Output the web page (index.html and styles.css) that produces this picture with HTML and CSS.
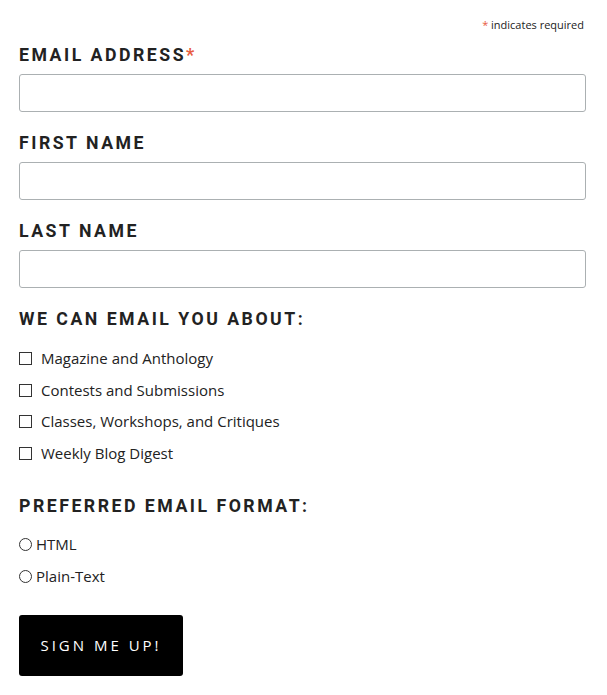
FILE: index.html
```html
<!DOCTYPE html>
<html>
<head>
<meta charset="utf-8">
<link rel="stylesheet" href="styles.css">
</head>
<body>
<form class="signup">
  <div class="req-note"><span class="asterisk">*</span> indicates required</div>
  <div class="field first">
    <label class="field-label" for="email">Email Address<span class="asterisk">*</span></label>
    <input class="text-input" id="email" type="email">
  </div>
  <div class="field">
    <label class="field-label" for="fname">First Name</label>
    <input class="text-input" id="fname" type="text">
  </div>
  <div class="field">
    <label class="field-label" for="lname">Last Name</label>
    <input class="text-input" id="lname" type="text">
  </div>
  <div class="group">
    <div class="field-label">We can email you about:</div>
    <ul class="options">
      <li><label class="check"><span class="box"></span>Magazine and Anthology</label></li>
      <li><label class="check"><span class="box"></span>Contests and Submissions</label></li>
      <li><label class="check"><span class="box"></span>Classes, Workshops, and Critiques</label></li>
      <li><label class="check"><span class="box"></span>Weekly Blog Digest</label></li>
    </ul>
  </div>
  <div class="group format">
    <div class="field-label">Preferred Email Format:</div>
    <ul class="options radios">
      <li><label class="radio"><span class="circle"></span>HTML</label></li>
      <li><label class="radio"><span class="circle"></span>Plain-Text</label></li>
    </ul>
  </div>
  <button class="submit" type="button">Sign Me Up!</button>
</form>
</body>
</html>
```
FILE: styles.css
```css
html, body {
  margin: 0;
  padding: 0;
  background: #fff;
}
body {
  font-family: "Open Sans", "Liberation Sans", sans-serif;
  color: #222;
}
.signup {
  padding: 18px 21px 0 19px;
  display: flex;
  flex-direction: column;
}
.req-note {
  text-align: right;
  font-size: 11px;
  line-height: 14px;
  color: #222;
  padding-right: 2px;
}
.asterisk {
  color: #e85c41;
}
.field-label .asterisk {
  font-size: 18px;
}
.field {
  display: flex;
  flex-direction: column;
}
.field.first {
  margin-top: 12px;
}
.field-label {
  display: block;
  font-family: Roboto, "Open Sans", sans-serif;
  font-size: 17.7px;
  font-weight: 700;
  letter-spacing: 2.5px;
  text-transform: uppercase;
  color: #222;
  line-height: 22px;
}
.text-input {
  margin: 8px 0 0;
  height: 38px;
  box-sizing: border-box;
  border: 1px solid #abb0b2;
  border-radius: 3px;
  padding: 0 8px;
  font: inherit;
  background: #fff;
}
.field + .field {
  margin-top: 20px;
}
.group {
  margin-top: 20px;
}
.group.format {
  margin-top: 31px;
}
.options {
  list-style: none;
  margin: 18px 0 0;
  padding: 0;
  display: flex;
  flex-direction: column;
  gap: 10.7px;
}
.radios {
  margin-top: 17px;
}
.check, .radio {
  display: flex;
  align-items: center;
  font-size: 15px;
  line-height: 21px;
  color: #222;
}
.box {
  width: 11px;
  height: 11px;
  border: 1px solid #333;
  margin-right: 9px;
  flex: none;
}
.circle {
  width: 11px;
  height: 11px;
  border: 1px solid #333;
  border-radius: 50%;
  margin-right: 4px;
  flex: none;
}
.submit {
  align-self: flex-start;
  margin-top: 28px;
  width: 164px;
  height: 61px;
  background: #000;
  color: #fff;
  border: none;
  border-radius: 3px;
  font-family: inherit;
  font-size: 15px;
  letter-spacing: 3px;
  text-transform: uppercase;
}
```
